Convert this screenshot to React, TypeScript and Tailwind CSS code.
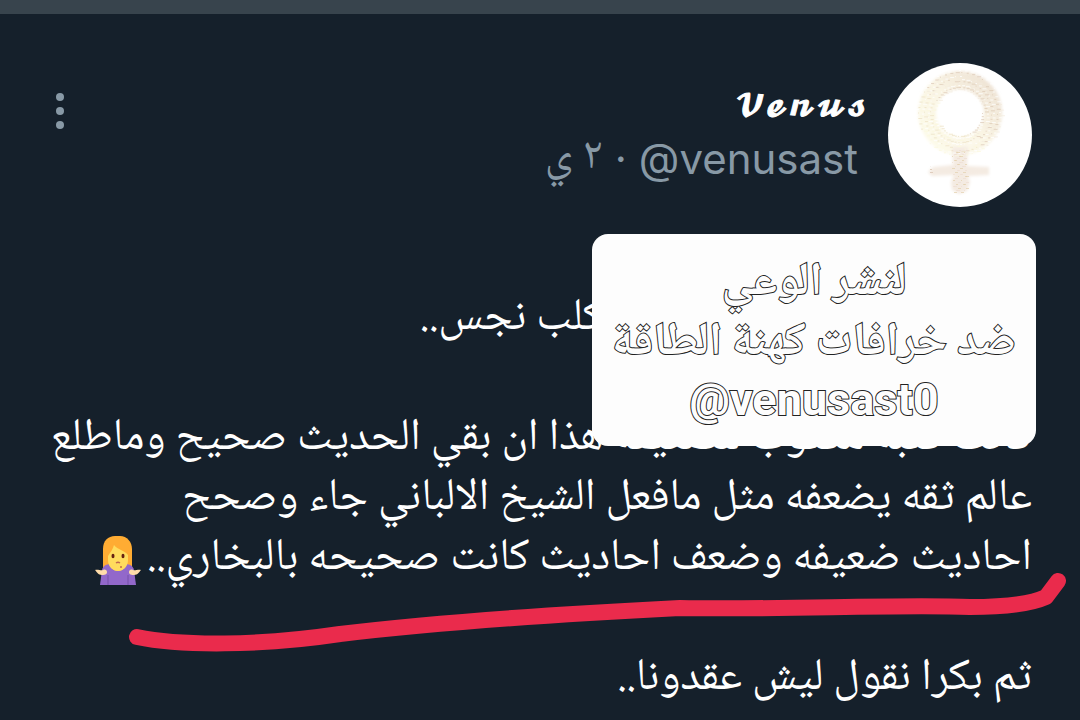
const ringSpeckles = Array.from({ length: 420 }, (_, i) => {
  const angle = i * 2.4;
  const radius = 23 + ((i * 37) % 21);
  const x = 71 + Math.cos(angle) * radius;
  const y = 50 + Math.sin(angle) * radius;
  const warm = x - y > 10;
  const tones = warm ? ["#decbb8", "#f3ebdf", "#ffffff"] : ["#ece2c6", "#fbf8df", "#ffffff"];
  return { x, y, w: 1 + (i % 4), color: tones[i % 3] };
});

const stemSpeckles = Array.from({ length: 130 }, (_, i) => {
  const onBar = i % 2 === 0;
  const tones = ["#d8c0ac", "#efdfd4", "#ffffff", "#e4d2b0"];
  return {
    x: onBar ? 42 + ((i * 29) % 58) : 64 + ((i * 7) % 15),
    y: onBar ? 103 + ((i * 3) % 9) : 86 + ((i * 13) % 44),
    w: 1 + (i % 3),
    color: tones[i % 4],
  };
});

function Avatar() {
  return (
    <svg viewBox="0 0 144 144" className="size-36 shrink-0 rounded-full bg-white" role="img" aria-label="Venus">
      <defs>
        <linearGradient id="gold" x1="0" y1="1" x2="1" y2="0">
          <stop offset="0" stopColor="#fdfbea" />
          <stop offset="0.5" stopColor="#faf5e4" />
          <stop offset="1" stopColor="#eee2d4" />
        </linearGradient>
        <filter id="soft" x="-20%" y="-20%" width="140%" height="140%">
          <feGaussianBlur stdDeviation="1.5" />
        </filter>
      </defs>
      <g filter="url(#soft)">
        <circle cx="72" cy="50" r="33" fill="none" stroke="url(#gold)" strokeWidth="18" />
        <path d="M50 76h44l-14 12h-14z" fill="#fcf8ea" />
        <path d="M64 84h16l-1 19 22 1v8l-21 1 2 6-3 9-8 3-7-4-1-8 3-7-22 1-4-4 5-5 20-2z" fill="#f4ebe2" />
      </g>
      {[...ringSpeckles, ...stemSpeckles].map((s, i) => (
        <rect key={i} x={s.x} y={s.y} width={s.w} height="1" fill={s.color} opacity="0.75" />
      ))}
    </svg>
  );
}

function Shrug() {
  return (
    <svg viewBox="0 0 48 50" className="mr-1 inline-block h-[50px] w-12 align-[-16px]" role="img" aria-label="shrug">
      <path d="M8 42V14C8 6 13 1 20 1h5c7 0 12 6 12 13v28z" fill="#ffac33" />
      <path d="M5 50l2-15c1-4 4-6 9-6h14c5 0 8 2 9 6l2 15z" fill="#9268ca" />
      <path d="M13 40v10M33 40v10" stroke="#7450a8" strokeWidth="1" />
      <path d="M17 29h12v4c-2 4-10 4-12 0z" fill="#ffcc4d" />
      <path d="M13 21c2-3 5-7 6-11 4 5 10 5 14 10v5c0 7-5 11-10 11s-10-4-10-11z" fill="#ffdc5d" />
      <path d="M0 35c3-1 6 1 8 0s4 0 4 2-1 3-5 3-5-3-7-5zM46 35c-3-1-6 1-8 0s-4 0-4 2 1 3 5 3 5-3 7-5z" fill="#ffdcaa" />
      <ellipse cx="18" cy="21" rx="1.500" ry="2.300" fill="#662113" />
      <ellipse cx="28" cy="21" rx="1.500" ry="2.300" fill="#662113" />
      <path d="M21 28q2-1.500 4 0" fill="none" stroke="#c1694f" strokeWidth="1.500" />
      <circle cx="26" cy="32" r="1" fill="#c1694f" />
    </svg>
  );
}

export default function App() {
  return (
    <main
      dir="rtl"
      className="relative min-h-screen overflow-hidden bg-[#15202b] font-['Noto_Naskh_Arabic','DejaVu_Sans',sans-serif] text-white"
    >
      <div className="h-3.5 bg-[#38444d]" />
      <article>
        <header className="flex items-start px-12 pt-[49px]">
          <Avatar />
          <div className="flex flex-1 flex-col items-start pr-[30px] pt-5">
            <h1 dir="ltr" className="-mr-2 font-['DejaVu_Math_TeX_Gyre','DejaVu_Sans',sans-serif] text-[28px] leading-12 [-webkit-text-stroke:1px_white]">𝓥𝓮𝓷𝓾𝓼</h1>
            <p className="flex items-center gap-3 text-[42px] leading-[56px] text-[#8899a6]">
              <a href="#venusast" dir="ltr" className="font-['Inter',sans-serif]">@venusast</a>
              <span className="font-['Inter',sans-serif]">·</span>
              <time className="text-[45px]">٢ ي</time>
            </p>
          </div>
          <button aria-label="المزيد" className="mt-[26px] flex w-6 flex-col items-center gap-1.5 py-1">
            <span className="size-2 rounded-full bg-[#8899a6]" />
            <span className="size-2 rounded-full bg-[#8899a6]" />
            <span className="size-2 rounded-full bg-[#8899a6]" />
          </button>
        </header>
        <div className="relative px-12 pt-[83px] text-[45px] leading-[60px] whitespace-nowrap">
          <p className="pr-[407px]">الكلب نجس..</p>
          <p className="pt-[60px]">
            كانت كتبه مكتوب للضعيفه هذا ان بقي الحديث صحيح وماطلع<br />
            عالم ثقه يضعفه مثل مافعل الشيخ الالباني جاء وصحح<br />
            احاديث ضعيفه وضعف احاديث كانت صحيحه بالبخاري..<Shrug />
          </p>
          <p className="pt-[60px]">ثم بكرا نقول ليش عقدونا..</p>
          <aside className="absolute top-[27px] right-11 w-[444px] rounded-2xl bg-[#fdfdfd] py-5 text-center text-[46px] font-bold text-[#fdfdfd] [-webkit-text-stroke:2px_#222] [paint-order:stroke_fill]">
            <p>لنشر الوعي</p>
            <p>ضد خرافات كهنة الطاقة</p>
            <p dir="ltr" className="font-['Roboto',sans-serif] text-[45px] leading-[52px]">@venusast0</p>
          </aside>
          <svg viewBox="0 0 1080 100" className="pointer-events-none absolute top-[357px] left-0 w-full" aria-hidden="true">
            <path
              d="M137 73C180 82 260 82 340 70C440 58 580 49 680 44C780 46 900 40 970 43C1015 43 1035 38 1046 33L1058 17"
              fill="none"
              stroke="#ea2b4c"
              strokeWidth="16"
              strokeLinecap="round"
              strokeLinejoin="round"
            />
          </svg>
        </div>
      </article>
    </main>
  );
}
